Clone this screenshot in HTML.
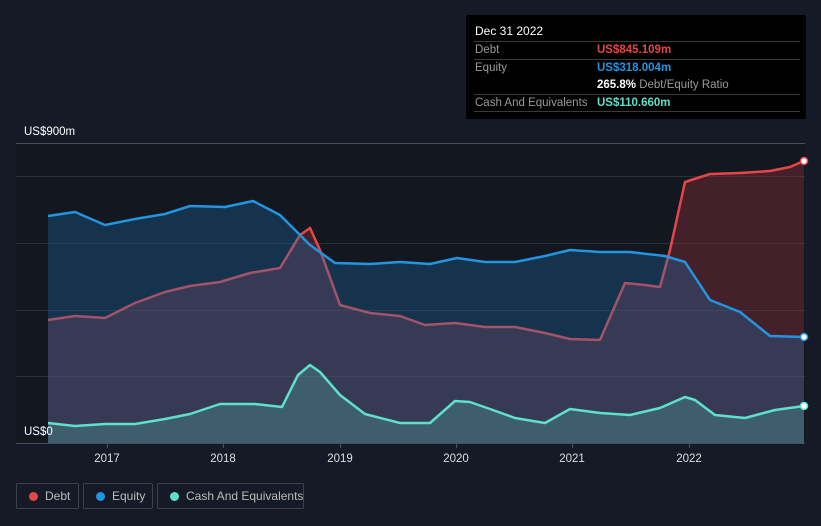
<!DOCTYPE html>
<html><head><meta charset="utf-8"><style>
body{margin:0;width:821px;height:526px;background:#151b26;font-family:"Liberation Sans",sans-serif;overflow:hidden;position:relative}
.tt{position:absolute;left:466px;top:15px;width:340px;height:104px;background:#000;border-radius:2px;font-size:11.5px}
.tt .h{position:absolute;left:9px;top:9px;color:#fff;font-size:12px}
.row{position:absolute;left:8px;width:326px;border-top:1px solid #3a3a3a;height:18px}
.row span{position:absolute;top:2px;white-space:nowrap}
.l{left:1px;color:#999}.v{left:123px;font-weight:bold}
.lg{position:absolute;top:483px;height:26px;border:1px solid #3c424c;border-radius:2px;color:#bbb;font-size:12px;box-sizing:border-box;line-height:24px;white-space:nowrap}
.lg i{position:absolute;left:12px;top:8px;width:9px;height:9px;border-radius:50%}
</style></head><body>
<svg width="821" height="526" style="position:absolute;left:0;top:0">
<rect x="16" y="143" width="789" height="300" fill="#121720"/>
<g stroke="#2a303b" stroke-width="1">
<line x1="16" y1="143.5" x2="805" y2="143.5" stroke="#4a505a"/>
<line x1="16" y1="176.5" x2="805" y2="176.5"/>
<line x1="16" y1="243.5" x2="805" y2="243.5"/>
<line x1="16" y1="310.5" x2="805" y2="310.5"/>
<line x1="16" y1="376.5" x2="805" y2="376.5"/>
</g>
<path d="M48,320 L75,316 105,318 135,303 165,292 190,286 220,282 250,273 280,268 300,235 310,228 320,250 340,305 370,313 400,316 425,325 455,323 485,327 515,327 545,333 570,339 600,340 625,283 645,285 660,287 670,250 685,182 710,174 740,173 770,171 790,167 804,161 L804,443 48,443Z" fill="rgba(150,50,60,0.38)"/>
<polyline points="48,320 75,316 105,318 135,303 165,292 190,286 220,282 250,273 280,268 300,235 310,228 320,250 340,305 370,313 400,316 425,325 455,323 485,327 515,327 545,333 570,339 600,340 625,283 645,285 660,287 670,250 685,182 710,174 740,173 770,171 790,167 804,161" fill="none" stroke="#e5464a" stroke-width="2.5" stroke-linejoin="round"/>
<path d="M48,216 L75,212 105,225 135,219 165,214 190,206 225,207 253,201 280,215 310,245 335,263 370,264 400,262 430,264 457,258 485,262 515,262 545,256 570,250 600,252 630,252 665,256 685,262 710,300 740,312 770,336 804,337 L804,443 48,443Z" fill="rgba(30,110,170,0.33)"/>
<polyline points="48,216 75,212 105,225 135,219 165,214 190,206 225,207 253,201 280,215 310,245 335,263 370,264 400,262 430,264 457,258 485,262 515,262 545,256 570,250 600,252 630,252 665,256 685,262 710,300 740,312 770,336 804,337" fill="none" stroke="#2394e0" stroke-width="2.5" stroke-linejoin="round"/>
<path d="M48,423 L75,426 105,424 135,424 165,419 190,414 220,404 255,404 282,407 298,375 310,365 320,372 340,395 365,414 400,423 430,423 455,401 470,402 490,409 515,418 545,423 570,409 600,413 630,415 660,408 685,397 695,400 715,415 745,418 775,410 804,406 L804,443 48,443Z" fill="rgba(90,220,200,0.22)"/>
<polyline points="48,423 75,426 105,424 135,424 165,419 190,414 220,404 255,404 282,407 298,375 310,365 320,372 340,395 365,414 400,423 430,423 455,401 470,402 490,409 515,418 545,423 570,409 600,413 630,415 660,408 685,397 695,400 715,415 745,418 775,410 804,406" fill="none" stroke="#5fe0cb" stroke-width="2.5" stroke-linejoin="round"/>
<line x1="16" y1="443.5" x2="805" y2="443.5" stroke="#4a505a"/>
<g stroke="#4a505a"><line x1="107.5" y1="443" x2="107.5" y2="448"/><line x1="223.5" y1="443" x2="223.5" y2="448"/><line x1="340.5" y1="443" x2="340.5" y2="448"/><line x1="456.5" y1="443" x2="456.5" y2="448"/><line x1="572.5" y1="443" x2="572.5" y2="448"/><line x1="689.5" y1="443" x2="689.5" y2="448"/></g>
<circle cx="804" cy="161" r="3.5" fill="#fff" stroke="#e5464a" stroke-width="1.5"/>
<circle cx="804" cy="337" r="3.5" fill="#fff" stroke="#2394e0" stroke-width="1.5"/>
<circle cx="804" cy="406" r="3.5" fill="#fff" stroke="#5fe0cb" stroke-width="1.5"/>
<g fill="#ddd" font-size="11.5" font-family="Liberation Sans" text-anchor="middle">
<text x="107" y="462">2017</text><text x="223" y="462">2018</text><text x="340" y="462">2019</text><text x="456" y="462">2020</text><text x="572" y="462">2021</text><text x="689" y="462">2022</text>
</g>
<text x="24" y="135" fill="#fff" font-size="11.5" font-family="Liberation Sans">US$900m</text>
<text x="24" y="435" fill="#fff" font-size="11.5" font-family="Liberation Sans">US$0</text>
</svg>
<div class="tt">
<div class="h">Dec 31 2022</div>
<div class="row" style="top:26px"><span class="l">Debt</span><span class="v" style="color:#e5464a">US$845.109m</span></div>
<div class="row" style="top:44px"><span class="l">Equity</span><span class="v" style="color:#2394e0">US$318.004m</span></div>
<div class="row" style="top:62px;border-top:none"><span class="v" style="color:#fff">265.8% <b style="color:#999;font-weight:normal">Debt/Equity Ratio</b></span></div>
<div class="row" style="top:79px;height:16px;border-bottom:1px solid #3a3a3a"><span class="l">Cash And Equivalents</span><span class="v" style="color:#5fe0cb">US$110.660m</span></div>
</div>
<div class="lg" style="left:16px;width:63px"><i style="background:#e5464a"></i><span style="position:absolute;left:28px">Debt</span></div>
<div class="lg" style="left:83px;width:70px"><i style="background:#2394e0"></i><span style="position:absolute;left:28px">Equity</span></div>
<div class="lg" style="left:157px;width:147px"><i style="background:#5fe0cb"></i><span style="position:absolute;left:28px">Cash And Equivalents</span></div>
</body></html>
